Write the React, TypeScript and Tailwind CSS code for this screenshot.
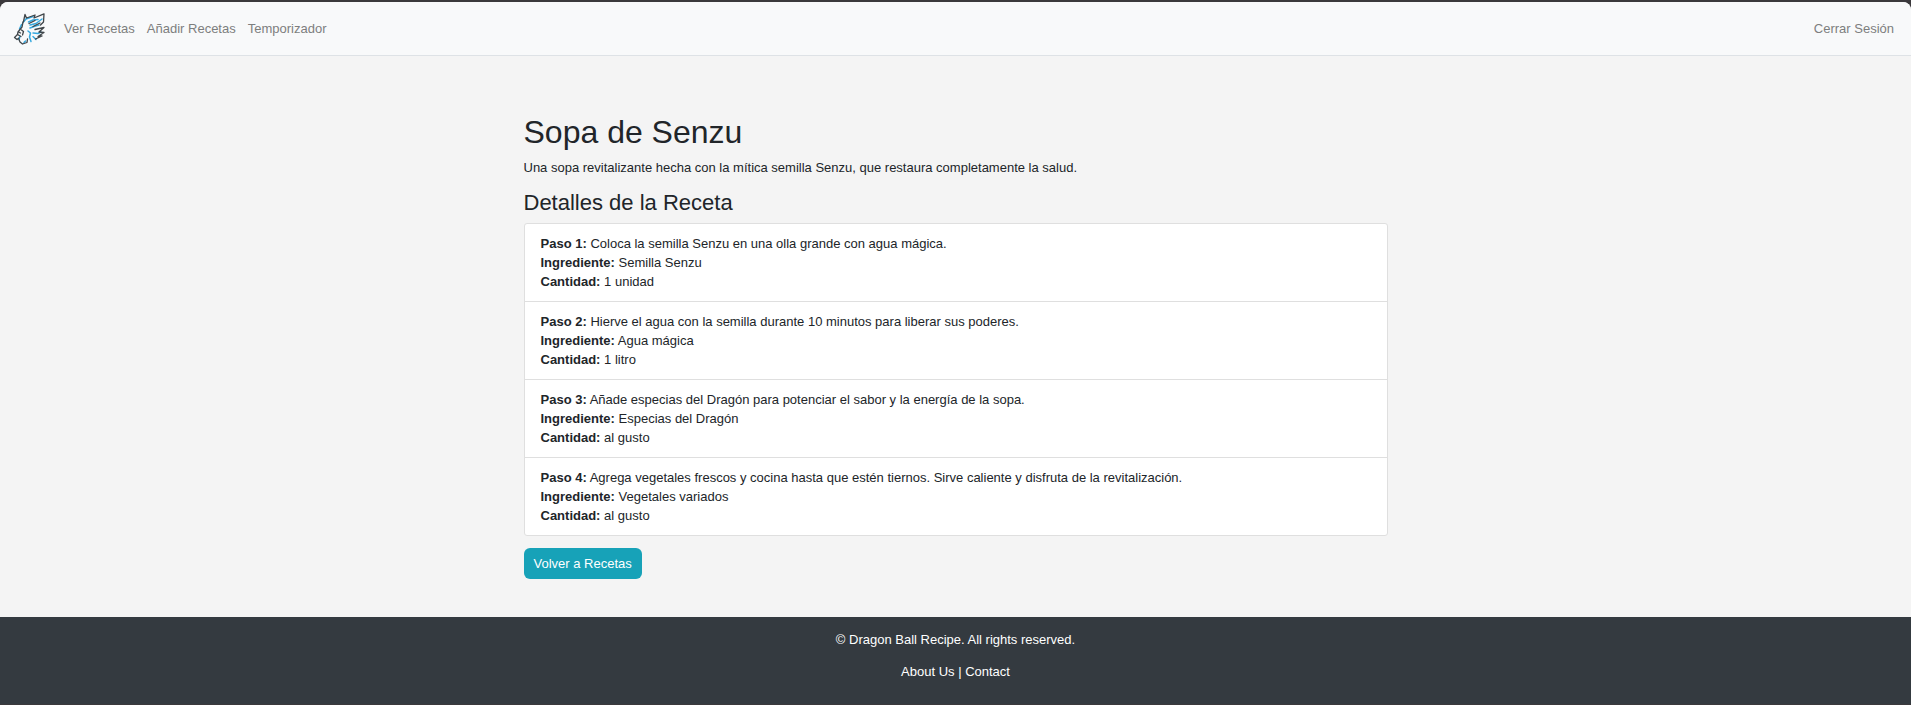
const navLinks = ["Ver Recetas", "Añadir Recetas", "Temporizador"];

const steps = [
  {
    text: "Coloca la semilla Senzu en una olla grande con agua mágica.",
    ingredient: "Semilla Senzu",
    amount: "1 unidad",
  },
  {
    text: "Hierve el agua con la semilla durante 10 minutos para liberar sus poderes.",
    ingredient: "Agua mágica",
    amount: "1 litro",
  },
  {
    text: "Añade especias del Dragón para potenciar el sabor y la energía de la sopa.",
    ingredient: "Especias del Dragón",
    amount: "al gusto",
  },
  {
    text: "Agrega vegetales frescos y cocina hasta que estén tiernos. Sirve caliente y disfruta de la revitalización.",
    ingredient: "Vegetales variados",
    amount: "al gusto",
  },
];

function Logo() {
  return (
    <svg viewBox="0 0 32 32" className="size-8" fill="none" strokeLinecap="round" strokeLinejoin="round" aria-hidden="true">
      <g stroke="#35a9e0" strokeWidth="1.5">
        <path d="M10 9.500 13 6 20 3.500" />
        <path d="M15.500 9 20 7 25 6.500M17 12 23 10.500 29 6" />
        <path d="M17 15 21 13.500 26 12M20 20 25 20.500 28 19" />
        <path d="M8.500 11.500 6.500 16M15 18 17.500 20 16.500 24 18 28.500M20 23.500 23 26.500" />
        <path d="M7 23.500 6 26.500M11 29.500 12.500 28" />
      </g>
      <g stroke="#3f4549" strokeWidth="1.3">
        <path d="M10.500 8.500 12 1.500 13.500 5 22 2 21 5 31 .8 30.500 9 27.500 12" />
        <path d="M10 9 9 14 5 19 4.500 21.500 1.500 24.500 4 26.500 6 25" />
        <path d="M4.500 21.500 8 23.500M6 26.500 7 29 9.500 31 14 29.500 14.500 26" />
        <path d="M22 7.500 16 10.500M27 10 20 13.500" />
        <path d="M22 16.500 31 14.500 26 19 31 19.500 25 23.500 29 23 22.500 26" />
        <path d="M8.500 17 10.500 18.500 9.500 22M5.500 19 7.500 20" />
      </g>
    </svg>
  );
}

export default function App() {
  return (
    <div className="flex min-h-screen flex-col bg-[#3b393c] font-['Liberation_Sans',Arial,sans-serif] text-[13px] leading-[19px] text-[#212529]">
      <div className="mt-0.5 flex grow flex-col rounded-t-lg bg-[#f4f4f4]">
        <header className="flex h-[54px] items-center rounded-t-lg border-b border-[#dee2e6] bg-[#f8f9fa] px-[13px] text-[#7d7e7e]">
          <a href="#inicio" aria-label="Inicio" className="mr-[19px]">
            <Logo />
          </a>
          <nav className="flex grow items-center gap-3">
            {navLinks.map((label) => (
              <a key={label} href="#">
                {label}
              </a>
            ))}
            <a href="#salir" className="ml-auto mr-1">
              Cerrar Sesión
            </a>
          </nav>
        </header>

        <main className="mx-auto w-full max-w-[864px] grow pt-[57px] pb-[38px]">
          <h1 className="mb-[7px] text-[32px] leading-[38px]">Sopa de Senzu</h1>
          <p className="mb-3">
            Una sopa revitalizante hecha con la mítica semilla Senzu, que restaura completamente la salud.
          </p>
          <h2 className="mb-1.5 text-[22px] leading-7">Detalles de la Receta</h2>
          <ul className="mb-3 divide-y divide-[#dfdfdf] rounded-[3px] border border-[#dfdfdf] bg-white">
            {steps.map((step, i) => (
              <li key={step.text} className="px-4 py-2.5">
                <p>
                  <strong>Paso {i + 1}:</strong> {step.text}
                </p>
                <p>
                  <strong>Ingrediente:</strong> {step.ingredient}
                </p>
                <p>
                  <strong>Cantidad:</strong> {step.amount}
                </p>
              </li>
            ))}
          </ul>
          <a href="#recetas" className="inline-block rounded-md bg-[#17a2b8] px-2.5 py-1.5 text-white">
            Volver a Recetas
          </a>
        </main>

        <footer className="flex h-[88px] flex-col items-center gap-[13px] border-b border-[#3b393c] bg-[#343a40] pt-[13px] text-white">
          <p>© Dragon Ball Recipe. All rights reserved.</p>
          <p>
            <a href="#about">About Us</a> | <a href="#contact">Contact</a>
          </p>
        </footer>
      </div>
    </div>
  );
}
